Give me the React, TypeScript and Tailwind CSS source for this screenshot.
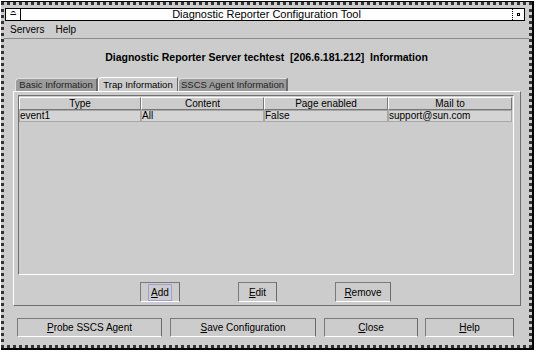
import React from "react";

const font = { fontFamily: '"Liberation Sans", Arial, sans-serif' };

interface TrapRow {
  type: string;
  content: string;
  page: string;
  mail: string;
}

const rows: TrapRow[] = [{ type: "event1", content: "All", page: "False", mail: "support@sun.com" }];

const columns = [
  { label: "Type", w: "w-[122px]" },
  { label: "Content", w: "w-[123px]" },
  { label: "Page enabled", w: "w-[124px]" },
  { label: "Mail to", w: "w-[124px]" },
];

// mnemonic button, first letter underlined
const MotifButton: React.FC<{ label: string; className: string; focused?: boolean }> = ({ label, className, focused }) => (
  <button
    className={`flex items-center justify-center border border-t-[#7a7a7a] border-l-[#7a7a7a] border-r-[#6a6a6a] border-b-white bg-[#cccccc] text-[10px] text-black whitespace-nowrap ${className}`}
  >
    <span className={focused ? "px-[2px] outline outline-1 outline-[#9f9fd8]" : ""}>
      <span className="underline">{label[0]}</span>
      {label.slice(1)}
    </span>
  </button>
);

export default function App() {
  return (
    <div className="w-[538px] h-[358px] bg-white pt-[1px] pl-[1px]" style={font}>
      <div className="w-[533px] h-[349px] border-t border-r-2 border-b-2 border-black">
        <div className="w-full h-full border-[3px] border-dotted border-[#333] bg-[#cccccc] flex flex-col">
          {/* Title bar */}
          <div className="mt-[3px] ml-[1px] w-[520px] h-[13px] flex border border-black bg-white">
            <div className="w-[15px] h-full border-r border-black flex items-start justify-center text-[8px] leading-[8px]">
              ⌓
            </div>
            <div className="flex-1 flex items-center justify-center text-[11px] leading-none text-black">
              Diagnostic Reporter Configuration Tool
            </div>
            <div className="w-[12px] h-full border-l border-dotted border-black flex items-center justify-center">
              <div className="w-[3px] h-[3px] border border-black" />
            </div>
          </div>

          {/* Menu bar */}
          <div className="h-[18px] flex items-center gap-[11px] pl-[6px] text-[10px] text-black border-b border-[#8a8a8a]">
            <span>Servers</span>
            <span>Help</span>
          </div>

          {/* Heading */}
          <div className="h-[38px] flex items-center justify-center text-[10.5px] font-bold text-black">
            Diagnostic Reporter Server techtest&nbsp; [206.6.181.212]&nbsp; Information
          </div>

          {/* Tabs */}
          <div className="h-[14px] flex items-end pl-[11px] text-[9.5px] leading-none whitespace-nowrap">
            <div className="w-[83px] h-[13px] flex items-center justify-center bg-[#9c9c9c] border-t border-l border-[#e0e0e0] border-r-2 border-r-[#6a6a6a] rounded-tl-[4px] text-[#222]">
              Basic Information
            </div>
            <div className="w-[80px] h-[14px] flex items-center justify-center bg-[#cccccc] border-t border-l border-white border-r border-r-[#6a6a6a] rounded-tl-[4px] text-black">
              Trap Information
            </div>
            <div className="w-[110px] h-[13px] flex items-center justify-center bg-[#9c9c9c] border-t border-l border-[#e0e0e0] border-r-2 border-r-[#6a6a6a] rounded-tl-[4px] text-[#222]">
              SSCS Agent Information
            </div>
          </div>

          {/* Panel */}
          <div className="ml-[9px] w-[508px] h-[215px] border-t border-l border-white border-r border-b border-r-[#6e6e6e] border-b-[#6e6e6e] flex flex-col pt-[3px] px-[4px]">
            <div className="w-[496px] h-[180px] border-t border-l border-[#707070] border-r border-b border-r-white border-b-white bg-[#cccccc] text-[10px] text-black">
              <div className="flex h-[13px] mt-[1px]">
                {columns.map((c) => (
                  <div
                    key={c.label}
                    className={`${c.w} flex items-center justify-center border-t border-l border-white border-r border-b border-r-[#777] border-b-[#777]`}
                  >
                    {c.label}
                  </div>
                ))}
              </div>
              {rows.map((r) => (
                <div key={r.type} className="flex h-[12px] bg-[#d4d4d4]">
                  {[r.type, r.content, r.page, r.mail].map((v, i) => (
                    <div
                      key={i}
                      className={`${columns[i].w} flex items-center border border-[#a8a8a8] leading-none`}
                    >
                      {v}
                    </div>
                  ))}
                </div>
              ))}
            </div>
            <div className="flex mt-[7px] h-[20px]">
              <MotifButton label="Add" className="ml-[122px] w-[40px] h-[20px]" focused />
              <MotifButton label="Edit" className="ml-[58px] w-[39px] h-[20px]" />
              <MotifButton label="Remove" className="ml-[58px] w-[56px] h-[20px]" />
            </div>
          </div>

          {/* Bottom buttons */}
          <div className="flex mt-[12px] h-[19px] pl-[13px]">
            <MotifButton label="Probe SSCS Agent" className="w-[145px] h-[19px]" />
            <MotifButton label="Save Configuration" className="ml-[8px] w-[146px] h-[19px]" />
            <MotifButton label="Close" className="ml-[8px] w-[94px] h-[19px]" />
            <MotifButton label="Help" className="ml-[7px] w-[89px] h-[19px]" />
          </div>
        </div>
      </div>
    </div>
  );
}
